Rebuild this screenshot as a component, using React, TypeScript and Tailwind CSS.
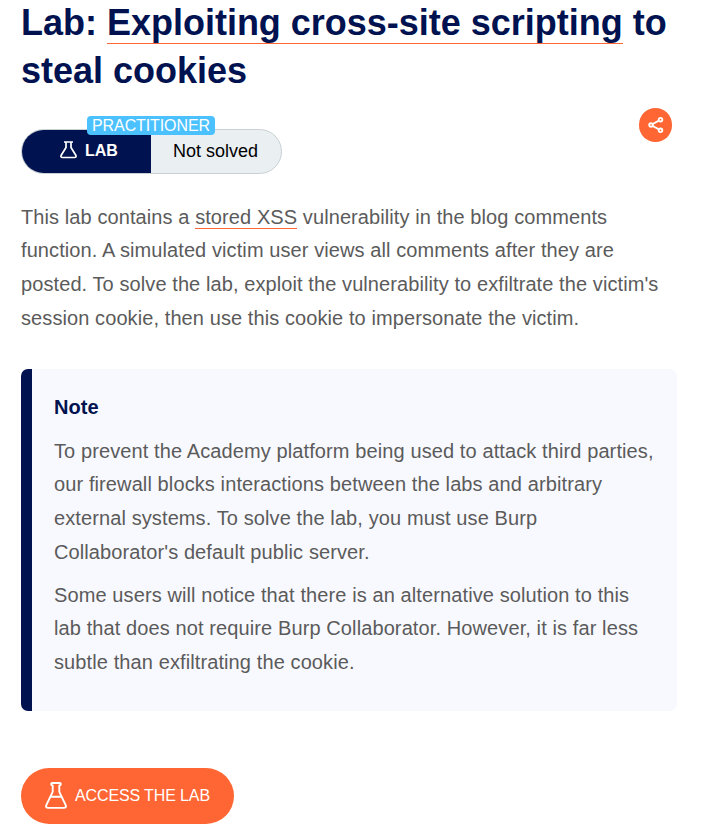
import React from "react";

function Flask({ className }: { className: string }) {
  return (
    <svg viewBox="0 0 22 27" className={className} fill="none" stroke="currentColor" strokeWidth="1.900" strokeLinecap="round" strokeLinejoin="round">
      <path d="M7.200 3.500C6 3.500 5.800 1 7.200 1h7.600c1.400 0 1.200 2.500 0 2.500M7.700 3.500v6.300L1.300 23.200c-.7 1.600.2 2.700 1.700 2.700h16c1.500 0 2.400-1.100 1.700-2.700L14.300 9.800V3.500M5.200 14.800h11.600" />
    </svg>
  );
}

function SmallFlask({ className }: { className: string }) {
  return (
    <svg viewBox="0 0 17 18" className={className} fill="none" stroke="currentColor" strokeWidth="1.700" strokeLinejoin="round">
      <path d="M4 1h9M6 1v5.500L1.200 14.200c-.7 1.200 0 2.300 1.200 2.300h12.200c1.200 0 1.900-1.100 1.200-2.300L11 6.500V1" />
    </svg>
  );
}

export default function App() {
  return (
    <main className="h-[838px] w-[701px] overflow-hidden bg-white pl-[21px] pr-6 font-['Liberation_Sans',Arial,sans-serif] text-[20px] leading-[33.660px] text-[#5b5b5b]">
      <h1 className="-mt-px whitespace-nowrap text-[36px] font-bold leading-[48px] tracking-[-0.01px] text-[#00124f]">
        Lab: <a className="border-b border-[#ff6633]">Exploiting cross-site scripting</a> to
        <br />
        steal cookies
      </h1>
      <div className="mt-[13px] flex h-[66px] items-start justify-between">
        <div className="relative mt-[21px] flex h-[45px] w-[261px] rounded-full border border-[#c8d0d3] bg-[#eaeff2] text-[18px] leading-[42px] text-black">
          <div className="flex w-[129px] items-center rounded-l-full bg-[#00124f] pl-[38px] pb-0.5 font-bold text-white">
            <SmallFlask className="-mt-0.5 mr-2 h-[18px] w-[17px]" />
            <span className="text-[16px]">LAB</span>
          </div>
          <span className="pl-[22px]">Not solved</span>
          <span className="absolute -top-[14px] left-[65px] h-[19px] w-[128px] whitespace-nowrap rounded-[4px] bg-[#4cc1ff] text-center text-[16px] leading-[19px] tracking-[-0.1px] text-white">PRACTITIONER</span>
        </div>
        <div className="mr-[5px] flex h-[34px] w-[33px] items-center justify-center rounded-full bg-[#ff6633] text-white">
          <svg viewBox="0 0 16 18" className="h-[18px] w-4" fill="none" stroke="currentColor" strokeWidth="1.900">
            <circle cx="3" cy="9" r="1.800" />
            <circle cx="12.500" cy="3.700" r="1.800" />
            <circle cx="12.500" cy="14.300" r="1.800" />
            <path d="M4.700 8 10.900 4.700M4.700 10l6.200 3.300" />
          </svg>
        </div>
      </div>
      <p className="mt-[26.700px] whitespace-nowrap tracking-[0.09px]">
        This lab contains a <a className="border-b border-[#ff6633]">stored XSS</a> vulnerability in the blog comments
        <br />
        function. A simulated victim user views all comments after they are
        <br />
        posted. To solve the lab, exploit the vulnerability to exfiltrate the victim's
        <br />
        session cookie, then use this cookie to impersonate the victim.
      </p>
      <section className="mt-[33.300px] h-[342px] whitespace-nowrap rounded-[7px] border-l-[11px] border-[#00124f] bg-[#f8f9fe] pl-[22px] pt-[22px] tracking-[0.105px]">
        <h2 className="font-bold tracking-[0.1px] text-[#00124f]">Note</h2>
        <p className="mt-[10.400px]">
          To prevent the Academy platform being used to attack third parties,
          <br />
          our firewall blocks interactions between the labs and arbitrary
          <br />
          external systems. To solve the lab, you must use Burp
          <br />
          Collaborator's default public server.
        </p>
        <p className="mt-[9.300px]">
          Some users will notice that there is an alternative solution to this
          <br />
          lab that does not require Burp Collaborator. However, it is far less
          <br />
          subtle than exfiltrating the cookie.
        </p>
      </section>
      <button className="mt-[57px] flex h-14 w-[213px] items-center whitespace-nowrap rounded-full bg-[#ff6633] pl-6 text-[16px] tracking-[-0.12px] text-white">
        <Flask className="mr-2 h-[27px] w-[22px]" />
        ACCESS THE LAB
      </button>
    </main>
  );
}
